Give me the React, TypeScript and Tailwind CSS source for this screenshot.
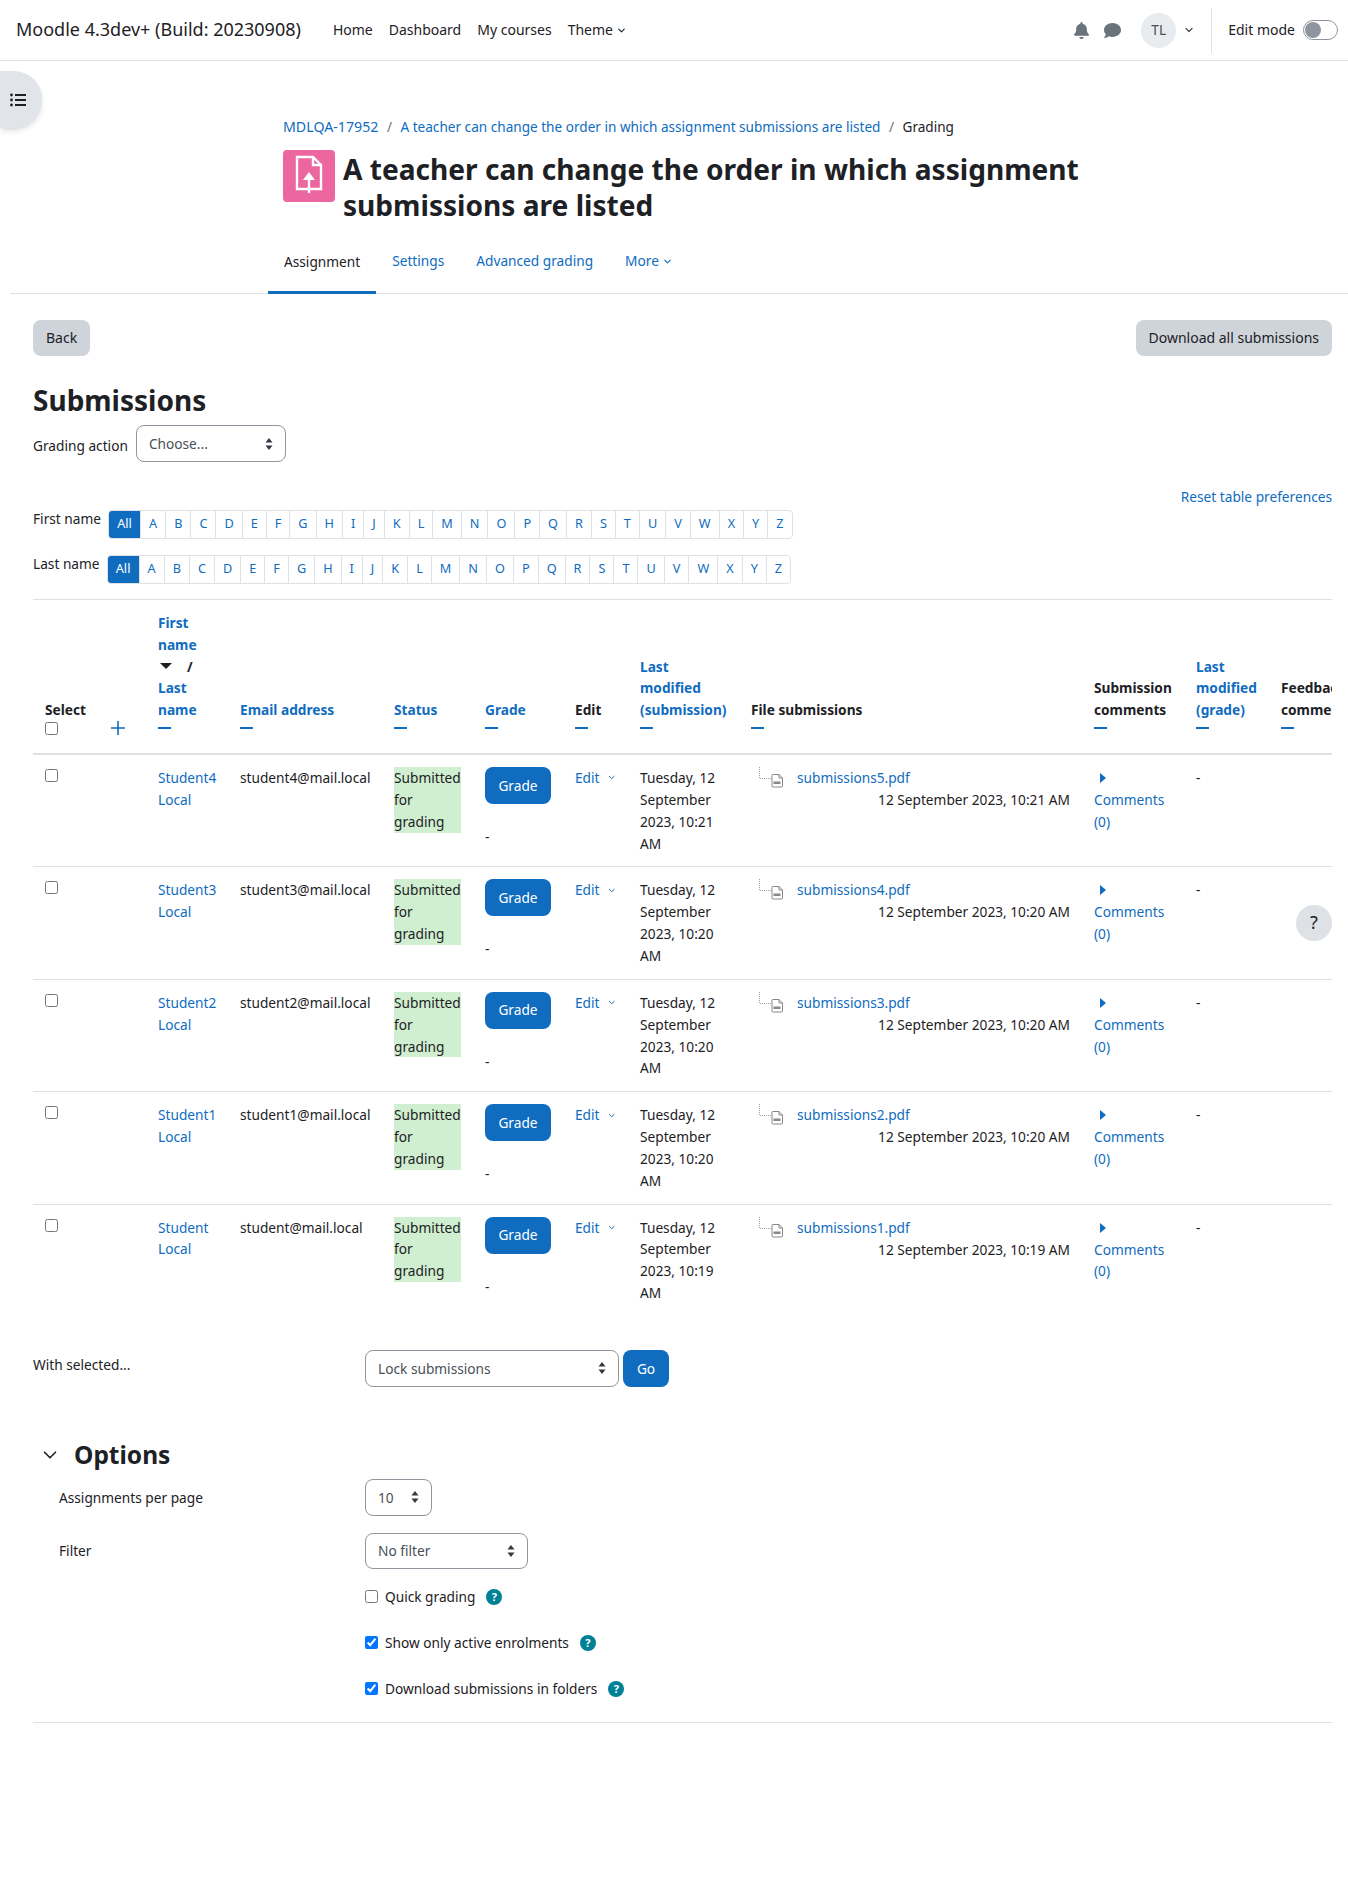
import React from "react";
import { ChevronDown } from "lucide-react";

const LINK = "text-[#0f6cbf]";
const letters = "A B C D E F G H I J K L M N O P Q R S T U V W X Y Z".split(" ");

function Arrows() {
  return (
    <svg width="8" height="14" viewBox="0 0 8 14" className="shrink-0">
      <path d="M4 1 L7.5 5.5 H0.5 Z M4 13 L0.5 8.5 H7.5 Z" fill="#343a40" />
    </svg>
  );
}

function Select({ label, className }: { label: string; className: string }) {
  return (
    <div className={"flex items-center justify-between rounded-lg border border-[#8f959e] pl-3 pr-3 text-[#495057] " + className}>
      <span>{label}</span>
      <Arrows />
    </div>
  );
}

function Help() {
  return (
    <span className="inline-flex h-4 w-4 items-center justify-center rounded-full bg-[#008196] text-[11px] font-bold text-white">?</span>
  );
}

function Dash() {
  return <div className="mt-[6px] h-[2px] w-[13px] bg-[#0f6cbf]" />;
}

function Alpha({ label, mt }: { label: string; mt: string }) {
  return (
    <div className={"flex items-start " + mt}>
      <span className="-mt-[2px] mr-[7px]">{label}</span>
      <div className="flex h-[29px] items-stretch overflow-hidden rounded border border-[#dee2e6] text-[12.7px]">
        <span className="flex w-[31px] items-center justify-center bg-[#0f6cbf] text-white">All</span>
        {letters.map((l) => (
          <span key={l} className={"flex items-center border-l border-[#dee2e6] px-[8px] " + LINK}>{l}</span>
        ))}
      </div>
    </div>
  );
}

function PdfTree() {
  return (
    <svg width="30" height="22" viewBox="0 0 30 22" className="shrink-0">
      <path d="M1.5 0 V11.5 H13" stroke="#9aa0a6" strokeWidth="1" strokeDasharray="1 1" fill="none" />
      <path d="M15 7.5 h6 l3.5 3.5 v8 q0 1 -1 1 h-8.5 q-1 0 -1 -1 v-10.5 q0 -1 1 -1 z" stroke="#888" strokeWidth="1" fill="#fff" />
      <path d="M21 7.5 v3.5 h3.5" stroke="#888" strokeWidth="1" fill="none" />
      <rect x="15.5" y="14.5" width="7" height="2.5" fill="#888" />
    </svg>
  );
}

const rows = [
  ["Student4", "student4@mail.local", "10:21", "submissions5.pdf"],
  ["Student3", "student3@mail.local", "10:20", "submissions4.pdf"],
  ["Student2", "student2@mail.local", "10:20", "submissions3.pdf"],
  ["Student1", "student1@mail.local", "10:20", "submissions2.pdf"],
  ["Student", "student@mail.local", "10:19", "submissions1.pdf"],
];

const th = "px-3 pb-[24px] align-bottom text-left font-bold";

export default function App() {
  return (
    <div className="relative min-h-[1898px] bg-white text-[13.7px] leading-[21.85px] text-[#1d2125]" style={{ fontFamily: '"Noto Sans", sans-serif' }}>
      <header className="flex h-[61px] items-center border-b border-[#dee2e6] pl-4 pr-[10px]">
        <span className="text-[18px]">Moodle 4.3dev+ (Build: 20230908)</span>
        <nav className="ml-[32px] flex items-center gap-4 text-[14px]">
          <span>Home</span>
          <span>Dashboard</span>
          <span>My courses</span>
          <span className="flex items-center gap-[3px]">Theme <ChevronDown size={11} strokeWidth={2.5} /></span>
        </nav>
        <div className="ml-auto flex h-[45px] items-center">
          <svg width="15" height="17" viewBox="0 0 448 512" fill="#6a737b"><path d="M224 512c35 0 64-29 64-64H160c0 35 29 64 64 64zm215-150c-19-21-55-52-55-154 0-78-54-140-128-155V32a32 32 0 1 0-64 0v21C118 68 64 130 64 208c0 102-36 133-55 154-6 6-9 14-9 22 0 16 13 32 32 32h384c19 0 32-16 32-32 0-8-3-16-9-22z" /></svg>
          <svg width="17" height="17" viewBox="0 0 512 512" fill="#6a737b" className="ml-[15px]"><path d="M256 32C115 32 0 125 0 240c0 49 21 95 56 131-12 50-54 95-55 96-2 2-3 6-1 9s4 4 8 4c66 0 115-32 140-51 33 12 69 19 108 19 141 0 256-93 256-208S397 32 256 32z" /></svg>
          <div className="ml-[20px] flex h-[35px] w-[35px] items-center justify-center rounded-full bg-[#e9ecef] text-[#495057]">TL</div>
          <ChevronDown size={12} strokeWidth={2.5} className="ml-[7px] text-[#495057]" />
          <div className="ml-[16px] h-full w-px bg-[#dee2e6]" />
          <span className="ml-4 text-[14px]">Edit mode</span>
          <div className="ml-2 flex h-[20px] w-[35px] items-center rounded-full border border-[#8f959e] px-[1px]">
            <div className="h-[16px] w-[16px] rounded-full bg-[#8f959e]" />
          </div>
        </div>
      </header>

      <div className="absolute left-0 top-[71px] flex h-[57px] w-[42px] items-center justify-center rounded-r-[28px] bg-[#e1e4e8] pr-[6px] shadow-md">
        <svg width="16" height="14" viewBox="0 0 16 14" fill="#1d2125"><circle cx="1.5" cy="2" r="1.4" /><circle cx="1.5" cy="7" r="1.4" /><circle cx="1.5" cy="12" r="1.4" /><rect x="5" y="1" width="11" height="2" /><rect x="5" y="6" width="11" height="2" /><rect x="5" y="11" width="11" height="2" /></svg>
      </div>

      <div className="ml-[283px] pt-[55px]">
        <div className="flex h-[22px] items-center gap-[8.5px] text-[13.6px]">
          <span className={"text-[14.2px] " + LINK}>MDLQA-17952</span><span className="text-[#6a737b]">/</span>
          <span className={LINK}>A teacher can change the order in which assignment submissions are listed</span><span className="text-[#6a737b]">/</span>
          <span>Grading</span>
        </div>
        <div className="mt-[12px] flex gap-[8px]">
          <div className="flex h-[52px] w-[52px] shrink-0 items-center justify-center rounded bg-[#ec66a0]">
            <svg width="30" height="42" viewBox="0 0 30 42" fill="none" stroke="#fff" strokeWidth="2.4">
              <path d="M3 2 H19 L27 10 V34 H3 Z" />
              <path d="M19 2 V10 H27" />
              <path d="M15 38 V22" />
              <path d="M15 17 L21 25 H9 Z" fill="#fff" stroke="none" />
            </svg>
          </div>
          <h1 className="mt-[1px] w-[780px] text-[28.1px] font-bold leading-[36px]">A teacher can change the order in which assignment submissions are listed</h1>
        </div>
      </div>

      <div className="ml-[10px] mt-[20px] flex h-[51px] border-b border-[#dee2e6] pl-[258px]">
        <div className="flex h-[51px] items-center border-b-[3px] border-[#0f6cbf] px-4 pb-[11px]">Assignment</div>
        <div className={"flex items-center px-4 pb-[14px] " + LINK}>Settings</div>
        <div className={"flex items-center px-4 pb-[14px] " + LINK}>Advanced grading</div>
        <div className={"flex items-center gap-[3px] px-4 pb-[14px] " + LINK}>More <ChevronDown size={11} strokeWidth={2.5} /></div>
      </div>

      <main className="px-[33px] pt-[26px] pr-[16px]">
        <div className="flex items-center justify-between text-[14px]">
          <div className="flex h-[36px] items-center rounded-lg bg-[#ced4da] px-[13px]">Back</div>
          <div className="flex h-[36px] items-center rounded-lg bg-[#ced4da] px-[13px]">Download all submissions</div>
        </div>
        <h2 className="mt-[26px] text-[28px] font-bold leading-[36px]">Submissions</h2>
        <div className="mt-[7px] flex items-center">
          <span className="pt-[4px]">Grading action</span>
          <Select label="Choose..." className="ml-2 h-[37px] w-[150px]" />
        </div>
        <div className="mt-[24px] text-right"><span className={LINK}>Reset table preferences</span></div>
        <Alpha label="First name" mt="mt-[2px]" />
        <Alpha label="Last name" mt="mt-[16px]" />

        <div className="mt-[15px] overflow-hidden border-t border-[#dee2e6]">
          <table className="w-[1340px] table-fixed border-collapse">
            <colgroup>
              <col className="w-[67px]" />
              <col className="w-[46px]" />
              <col className="w-[82px]" />
              <col className="w-[154px]" />
              <col className="w-[91px]" />
              <col className="w-[90px]" />
              <col className="w-[65px]" />
              <col className="w-[111px]" />
              <col className="w-[343px]" />
              <col className="w-[102px]" />
              <col className="w-[85px]" />
              <col className="w-[104px]" />
            </colgroup>
            <thead>
              <tr className="border-b-2 border-[#dee2e6]">
                <th className="px-3 pb-[18px] align-bottom text-left font-bold">Select<div className="mt-[1px] h-[13px]"><input type="checkbox" className="block h-[13px] w-[13px]" /></div></th>
                <th className="pb-[18px] align-bottom text-left"><svg width="14" height="14" viewBox="0 0 14 14" className="ml-[11px] block"><path d="M7 0 V14 M0 7 H14" stroke="#0f6cbf" strokeWidth="1.6" /></svg></th>
                <th className={th + " pt-[12px]"}>
                  <div className={LINK}>First name</div>
                  <div className="flex items-center gap-[15px]"><span className="ml-[2px] inline-block border-x-[6px] border-t-[6px] border-x-transparent border-t-[#1d2125]" /><span>/</span></div>
                  <div className={LINK}>Last name</div>
                  <Dash />
                </th>
                <th className={th}><div className={LINK}>Email address</div><Dash /></th>
                <th className={th}><div className={LINK}>Status</div><Dash /></th>
                <th className={th}><div className={LINK}>Grade</div><Dash /></th>
                <th className={th}><div>Edit</div><Dash /></th>
                <th className={th}><div className={"w-[90px] " + LINK}>Last modified (submission)</div><Dash /></th>
                <th className={th}><div>File submissions</div><Dash /></th>
                <th className={th}><div>Submission comments</div><Dash /></th>
                <th className={th}><div className={LINK}>Last modified (grade)</div><Dash /></th>
                <th className={th + " whitespace-nowrap"}><div>Feedback<br />comments</div><Dash /></th>
              </tr>
            </thead>
            <tbody>
              {rows.map((r, i) => (
                <tr key={r[0]} className={"align-top " + (i < 4 ? "border-b border-[#dee2e6]" : "")}>
                  <td className="px-3 pt-3 pb-3"><input type="checkbox" className="mt-[2px] block h-[13px] w-[13px]" /></td>
                  <td />
                  <td className={"px-3 py-3 " + LINK}>{r[0]}<br />Local</td>
                  <td className="px-3 py-3 whitespace-nowrap">{r[1]}</td>
                  <td className="px-3 py-3"><div className="bg-[#d0efd0]">Submitted for grading</div></td>
                  <td className="px-3 py-3">
                    <div className="flex h-[37px] w-[66px] items-center justify-center rounded-lg bg-[#0f6cbf] text-white">Grade</div>
                    <div className="mt-[22px]">-</div>
                  </td>
                  <td className={"px-3 py-3 " + LINK}><span className="flex items-center gap-[7px]">Edit <ChevronDown size={11} strokeWidth={2.5} /></span></td>
                  <td className="px-3 py-3">{`Tuesday, 12 September 2023, ${r[2]} AM`}</td>
                  <td className="px-3 py-3">
                    <div className="flex items-start pl-[7px]"><PdfTree /><span className={"ml-[9px] " + LINK}>{r[3]}</span></div>
                    <div className="whitespace-nowrap text-right">{`12 September 2023, ${r[2]} AM`}</div>
                  </td>
                  <td className="px-3 py-3">
                    <div className="flex h-[22px] items-center pl-[6px]"><span className="inline-block border-y-[5px] border-l-[6px] border-y-transparent border-l-[#0f6cbf]" /></div>
                    <div className={LINK}>Comments (0)</div>
                  </td>
                  <td className="px-3 py-3">-</td>
                  <td />
                </tr>
              ))}
            </tbody>
          </table>
        </div>

        <div className="mt-[34px] flex items-start">
          <span className="mt-[4px] w-[332px]">With selected...</span>
          <Select label="Lock submissions" className="h-[37px] w-[254px]" />
          <div className="ml-1 flex h-[37px] w-[46px] items-center justify-center rounded-lg bg-[#0f6cbf] text-white">Go</div>
        </div>

        <div className="mt-[50px] flex items-center">
          <ChevronDown size={22} strokeWidth={1.8} className="ml-[6px]" />
          <h3 className="ml-[13px] text-[24.5px] font-bold leading-[36px]">Options</h3>
        </div>
        <div className="mt-[6px] flex items-center">
          <span className="ml-[26px] w-[306px]">Assignments per page</span>
          <Select label="10" className="h-[37px] w-[67px]" />
        </div>
        <div className="mt-[17px] flex items-center">
          <span className="ml-[26px] w-[306px]">Filter</span>
          <Select label="No filter" className="h-[36px] w-[163px]" />
        </div>
        <div className="ml-[332px] mt-[17px] flex items-center gap-[7px]"><input type="checkbox" className="h-[13px] w-[13px]" /><span className="mr-1">Quick grading</span><Help /></div>
        <div className="ml-[332px] mt-[24px] flex items-center gap-[7px]"><input type="checkbox" defaultChecked className="h-[13px] w-[13px]" /><span className="mr-1">Show only active enrolments</span><Help /></div>
        <div className="ml-[332px] mt-[24px] flex items-center gap-[7px]"><input type="checkbox" defaultChecked className="h-[13px] w-[13px]" /><span className="mr-1">Download submissions in folders</span><Help /></div>
        <div className="mt-[23px] h-px bg-[#dee2e6]" />
      </main>

      <div className="absolute left-[1296px] top-[905px] flex h-[36px] w-[36px] items-center justify-center rounded-full bg-[#dee2e6] text-[18px] text-[#1d2125]">?</div>
    </div>
  );
}
